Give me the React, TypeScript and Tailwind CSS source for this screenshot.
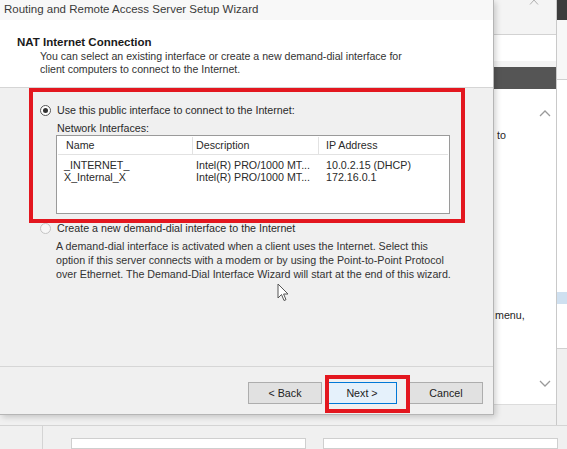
import React from 'react';

const columns = [
  { label: 'Name', width: 'w-[135px]', pad: 'pl-[8px]' },
  { label: 'Description', width: 'w-[126px]', pad: 'pl-[3px]' },
  { label: 'IP Address', width: 'flex-1', pad: 'pl-[7px]' },
];

const interfaces = [
  { name: '_INTERNET_', description: 'Intel(R) PRO/1000 MT...', ip: '10.0.2.15 (DHCP)' },
  { name: 'X_Internal_X', description: 'Intel(R) PRO/1000 MT...', ip: '172.16.0.1' },
];

function Radio({ checked }: { checked?: boolean }) {
  return (
    <span
      className={
        checked
          ? 'w-[11px] h-[11px] rounded-full border border-[#555] bg-white flex items-center justify-center shrink-0'
          : 'w-[11px] h-[11px] rounded-full border border-[#c4c4c4] bg-[#f7f7f7] flex items-center justify-center shrink-0'
      }
    >
      {checked && <span className="w-[5px] h-[5px] rounded-full bg-[#333]" />}
    </span>
  );
}

function WizardButton({ label, primary }: { label: string; primary?: boolean }) {
  return (
    <button
      className={
        primary
          ? 'w-[70px] h-[22px] flex items-center justify-center bg-[#e5f1fb] border border-[#0078d7] text-[10.7px] leading-none text-[#222]'
          : 'w-[74px] h-[22px] flex items-center justify-center bg-[#e1e1e1] border border-[#adadad] text-[10.7px] leading-none text-[#222]'
      }
    >
      {label}
    </button>
  );
}

function Chevron({ up }: { up?: boolean }) {
  return (
    <svg width="12" height="7" viewBox="0 0 12 7" fill="none" stroke="#9a9a9a" strokeWidth="1.3">
      {up ? <polyline points="1,6 6,1 11,6" /> : <polyline points="1,1 6,6 11,1" />}
    </svg>
  );
}

export default function App() {
  return (
    <div
      className="relative w-[567px] h-[449px] overflow-hidden bg-[#f0f0f0] text-[#262626]"
      style={{ fontFamily: '"Liberation Sans", Arial, sans-serif' }}
    >
      {/* background application */}
      <div className="flex flex-col h-full">
        <div className="flex h-[425px]">
          <div className="w-[494px] bg-[#f0f0f0]" />
          <div className="w-[63px] flex flex-col border-r border-[#c9c9c9]">
            <div className="h-[35px] bg-[#f4f4f4] border-b border-[#d2d2d2] flex justify-end items-start pr-[17px]">
              {/* bottom of the close glyph of the window behind */}
              <svg width="10" height="5" viewBox="0 0 10 5" stroke="#b0b0b0" strokeWidth="1">
                <line x1="1" y1="4.5" x2="5" y2="0" />
                <line x1="9" y1="4.5" x2="5" y2="0" />
              </svg>
            </div>
            <div className="h-[26px] bg-white" />
            <div className="h-[6px] bg-[#f4f4f4]" />
            <div className="h-[22px] bg-[#555]" />
            <div className="flex-1 bg-white flex flex-col pl-[3px] pr-[5px] pt-[21px] text-[10.7px]">
              <div className="flex justify-end">
                <Chevron up />
              </div>
              <div className="mt-[12px] leading-[13px]">to</div>
              <div className="mt-[167px] leading-[13px] -ml-[2px]">menu,</div>
              <div className="flex justify-end mt-[58px]">
                <Chevron />
              </div>
            </div>
            <div className="h-[21px] bg-[#f0f0f0] border-t border-[#dcdcdc]" />
          </div>
          <div className="flex-1 flex flex-col">
            <div className="h-[20px] bg-[#3c3c3c]" />
            <div className="h-[60px] bg-[#f7f7f7] border-b border-[#d0d0d0]" />
            <div className="h-[212px] bg-white" />
            <div className="h-[12px] bg-[#cfe0f0]" />
            <div className="h-[45px] bg-white border-b border-[#d0d0d0]" />
            <div className="flex-1 bg-[#f0f0f0]" />
          </div>
        </div>
        <div className="flex-1 flex border-t border-[#d4d4d4]">
          <div className="w-[43px] border-r border-[#d4d4d4] bg-[#f0f0f0]" />
          <div className="flex-1 flex gap-[17px] pl-[28px] pt-[12px]">
            <div className="w-[235px] bg-white border border-[#cfcfcf]" />
            <div className="w-[235px] bg-white border border-[#cfcfcf]" />
          </div>
        </div>
      </div>

      {/* wizard dialog window */}
      <div className="absolute left-0 top-0 w-[494px] h-[415px] flex flex-col bg-[#f0f0f0] border-r border-b border-[#b5b5b5] shadow-[2px_2px_6px_rgba(0,0,0,0.18)]">
        <div className="h-[20px] bg-[#f8f8f8] flex items-center pl-[4px] text-[11.5px] text-[#3a3a3a]">
          Routing and Remote Access Server Setup Wizard
        </div>
        <div className="h-[68px] bg-white border-b border-[#d5d5d5] pl-[17px] pt-[15px]">
          <div className="text-[11.5px] font-bold leading-[14px] text-[#1a1a1a]">NAT Internet Connection</div>
          <div className="pl-[23px] mt-[1px] text-[10.6px] leading-[13px] text-[#333]">
            You can select an existing interface or create a new demand-dial interface for
            <br />
            client computers to connect to the Internet.
          </div>
        </div>
        <div className="flex-1 pl-[40px] pt-[15px] text-[10.7px] text-[#2a2a2a]">
          <div className="flex items-center gap-[6px] h-[14px]">
            <Radio checked />
            <span>Use this public interface to connect to the Internet:</span>
          </div>
          <div className="pl-[17px] mt-[4px] h-[14px] leading-[14px]">Network Interfaces:</div>
          <div className="ml-[16px] w-[394px] h-[79px] bg-white border border-[#9a9a9a] p-[1px]">
            <div className="flex h-[18px] border-b border-[#e2e2e2]">
              {columns.map((c) => (
                <div
                  key={c.label}
                  className={`${c.width} ${c.pad} h-full flex items-center border-r border-[#e2e2e2] last:border-r-0`}
                >
                  {c.label}
                </div>
              ))}
            </div>
            <div className="pt-[4px]">
              {interfaces.map((row) => (
                <div key={row.name} className="flex h-[12px] leading-[12px]">
                  <div className="w-[135px] pl-[6px]">{row.name}</div>
                  <div className="w-[126px] pl-[3px]">{row.description}</div>
                  <div className="flex-1 pl-[7px]">{row.ip}</div>
                </div>
              ))}
            </div>
          </div>
          <div className="flex items-center gap-[6px] h-[14px] mt-[7px]">
            <Radio />
            <span>Create a new demand-dial interface to the Internet</span>
          </div>
          <div className="pl-[16px] mt-[4px] leading-[14px] text-[#333]">
            A demand-dial interface is activated when a client uses the Internet. Select this
            <br />
            option if this server connects with a modem or by using the Point-to-Point Protocol
            <br />
            over Ethernet. The Demand-Dial Interface Wizard will start at the end of this wizard.
          </div>
        </div>
        <div className="h-[48px] border-t border-[#d6d6d6] flex justify-end items-start gap-[5px] pt-[15px] pr-[10px]">
          <WizardButton label="< Back" />
          <WizardButton label="Next >" primary />
          <div className="w-[2px]" />
          <WizardButton label="Cancel" />
        </div>
      </div>

      {/* mouse pointer */}
      <svg className="absolute left-[277px] top-[283px]" width="12" height="19" viewBox="0 0 12 19">
        <path d="M1 1 L1 15 L4.5 11.5 L7 17.5 L9 16.7 L6.6 11 L11 11 Z" fill="white" stroke="#555" strokeWidth="1" />
      </svg>

      {/* red annotation boxes */}
      <div className="absolute left-[29px] top-[88px] w-[436px] h-[135px] border-[4px] border-[#e3171f]" />
      <div className="absolute left-[325px] top-[375px] w-[85px] h-[38px] border-[4px] border-[#e3171f]" />
    </div>
  );
}
